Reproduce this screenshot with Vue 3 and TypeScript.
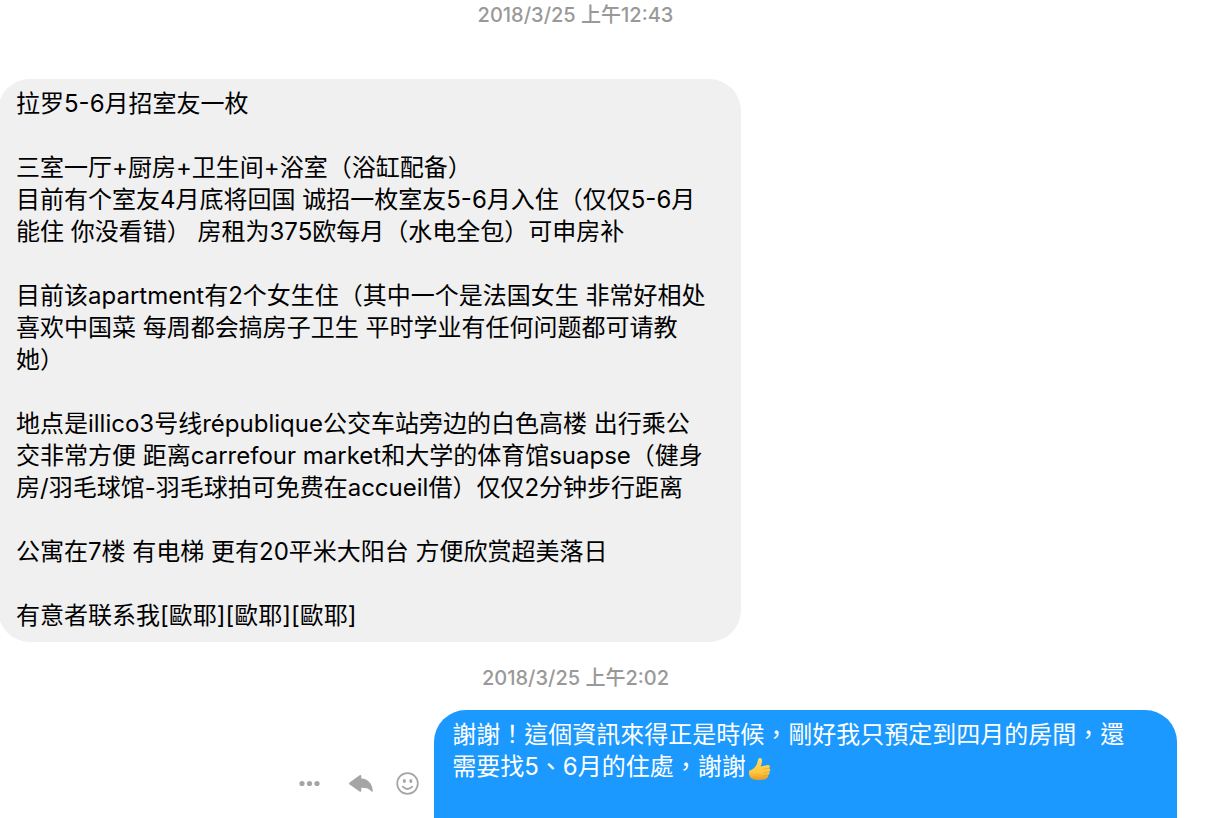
<script setup lang="ts">
interface Message {
  id: number
  time: string
  lines: string[]
}

const received: Message = {
  id: 1,
  time: '2018/3/25 上午12:43',
  lines: [
    '拉罗5-6月招室友一枚',
    '',
    '三室一厅+厨房+卫生间+浴室（浴缸配备）',
    '目前有个室友4月底将回国 诚招一枚室友5-6月入住（仅仅5-6月',
    '能住 你没看错） 房租为375欧每月（水电全包）可申房补',
    '',
    '目前该apartment有2个女生住（其中一个是法国女生 非常好相处',
    '喜欢中国菜 每周都会搞房子卫生 平时学业有任何问题都可请教',
    '她）',
    '',
    '地点是illico3号线république公交车站旁边的白色高楼 出行乘公',
    '交非常方便 距离carrefour market和大学的体育馆suapse（健身',
    '房/羽毛球馆-羽毛球拍可免费在accueil借）仅仅2分钟步行距离',
    '',
    '公寓在7楼 有电梯 更有20平米大阳台 方便欣赏超美落日',
    '',
    '有意者联系我[歐耶][歐耶][歐耶]',
  ],
}

const sent: Message = {
  id: 2,
  time: '2018/3/25 上午2:02',
  lines: ['謝謝！這個資訊來得正是時候，剛好我只預定到四月的房間，還', '需要找5、6月的住處，謝謝'],
}
</script>

<template>
  <main class="thread">
    <time class="stamp stamp-first">{{ received.time }}</time>
    <article class="row">
      <p class="bubble received" lang="zh-Hans">{{ received.lines.join('\n') }}</p>
    </article>

    <time class="stamp">{{ sent.time }}</time>
    <article class="row row-sent">
      <div class="actions">
        <button type="button" aria-label="更多">
          <svg viewBox="0 0 24 24" aria-hidden="true">
            <circle cx="2" cy="11.5" r="2.6" />
            <circle cx="9.5" cy="11.5" r="2.6" />
            <circle cx="17" cy="11.5" r="2.6" />
          </svg>
        </button>
        <button type="button" aria-label="回覆">
          <svg viewBox="0 0 24 24" aria-hidden="true">
            <path d="M1.6 10.4 11.6 3.3Q13.2 2.4 13.3 4.2V6.6C20.2 7 24.3 11.8 24.8 18.8Q24.8 20.3 23.5 19.4C21.3 16.6 18.2 15.6 13.3 15.7V18.4Q13.2 20.4 11.6 19.4L1.6 12.5Q.5 11.4 1.6 10.4Z" />
          </svg>
        </button>
        <button type="button" aria-label="傳達心情">
          <svg viewBox="0 0 24 24" aria-hidden="true">
            <circle cx="11.5" cy="11.5" r="10.3" fill="none" stroke="currentColor" stroke-width="1.7" />
            <ellipse cx="8.3" cy="9.1" rx="1.5" ry="2" />
            <ellipse cx="14.8" cy="9.1" rx="1.5" ry="2" />
            <path d="M6.7 14.6Q11.5 19.4 16.3 14.6" fill="none" stroke="currentColor" stroke-width="1.7" stroke-linecap="round" />
          </svg>
        </button>
      </div>
      <p class="bubble sent" lang="zh-Hant">{{ sent.lines.join('\n') }}<svg class="thumb" viewBox="0 0 24 24" role="img" aria-label="讚">
          <defs>
            <linearGradient id="skin" x1="0" y1="0" x2="0" y2="1">
              <stop offset="0" stop-color="#ffdc60" />
              <stop offset=".65" stop-color="#ffc83f" />
              <stop offset="1" stop-color="#e89a25" />
            </linearGradient>
          </defs>
          <path fill="url(#skin)" d="M1.6 13.5C4.8 12.8 7.2 10.4 8.7 7.5C9.8 5.3 9.7 1.5 11.6 1C14.1.5 14.5 3.5 13.7 6.1L12.7 9.6L19.6 7.9C22.1 7.7 22.6 10.3 21 11.2C22.8 11.8 22.7 14.3 21 14.8C22.2 15.8 21.5 17.8 20 18.2C20.5 19.8 19.2 21.4 17.4 21.9C12.7 23.2 7.2 23.3 4.6 21.8C1 21.4.2 14.7 1.6 13.5Z" />
          <path fill="none" stroke="#e09a2c" stroke-width=".6" stroke-linecap="round" d="M16 12.2 21 11.2M16.2 15.6 21 14.8M16 18.9 20 18.2M4.6 21.8C8 23 13 23.1 17.4 21.9" />
        </svg></p>
    </article>
  </main>
</template>

<style>
body {
  margin: 0;
  background: #fff;
}
</style>

<style scoped>
.thread {
  box-sizing: border-box;
  display: flex;
  flex-direction: column;
  min-height: 100vh;
  margin-left: -2px;
  padding-right: 29px;
  font-family: Inter, 'Noto Sans CJK SC', sans-serif;
}

.stamp {
  padding: 22px 24px 18px 0;
  color: #999;
  font-family: Inter, 'Noto Sans CJK TC', sans-serif;
  font-size: 20px;
  font-weight: 500;
  line-height: 28px;
  text-align: center;
}

.stamp-first {
  padding-top: 1px;
  padding-bottom: 50px;
}

.row {
  display: flex;
  align-items: flex-start;
}

.row-sent {
  flex: 1;
  justify-content: flex-end;
  align-items: stretch;
}

.bubble {
  box-sizing: border-box;
  width: 63%;
  margin: 0;
  padding: 9px 16px 10px 18px;
  font-size: 24px;
  line-height: 32px;
  white-space: pre-wrap;
}

.received {
  border-radius: 32px;
  background: #f0f0f0;
  color: #000;
}

.sent {
  border-radius: 32px 32px 0 0;
  background: #1b99fe;
  color: #fff;
  font-family: Inter, 'Noto Sans CJK TC', sans-serif;
}

.actions {
  display: flex;
  align-items: flex-start;
  gap: 24px;
  padding: 62px 14px 0 0;
}

.actions button {
  width: 24px;
  height: 24px;
  padding: 0;
  border: 0;
  background: none;
  color: #a5a5a5;
  cursor: pointer;
}

.actions svg {
  display: block;
  overflow: visible;
  fill: currentColor;
}

.thumb {
  width: 24px;
  height: 24px;
  margin-left: 2px;
  vertical-align: -6px;
}
</style>
